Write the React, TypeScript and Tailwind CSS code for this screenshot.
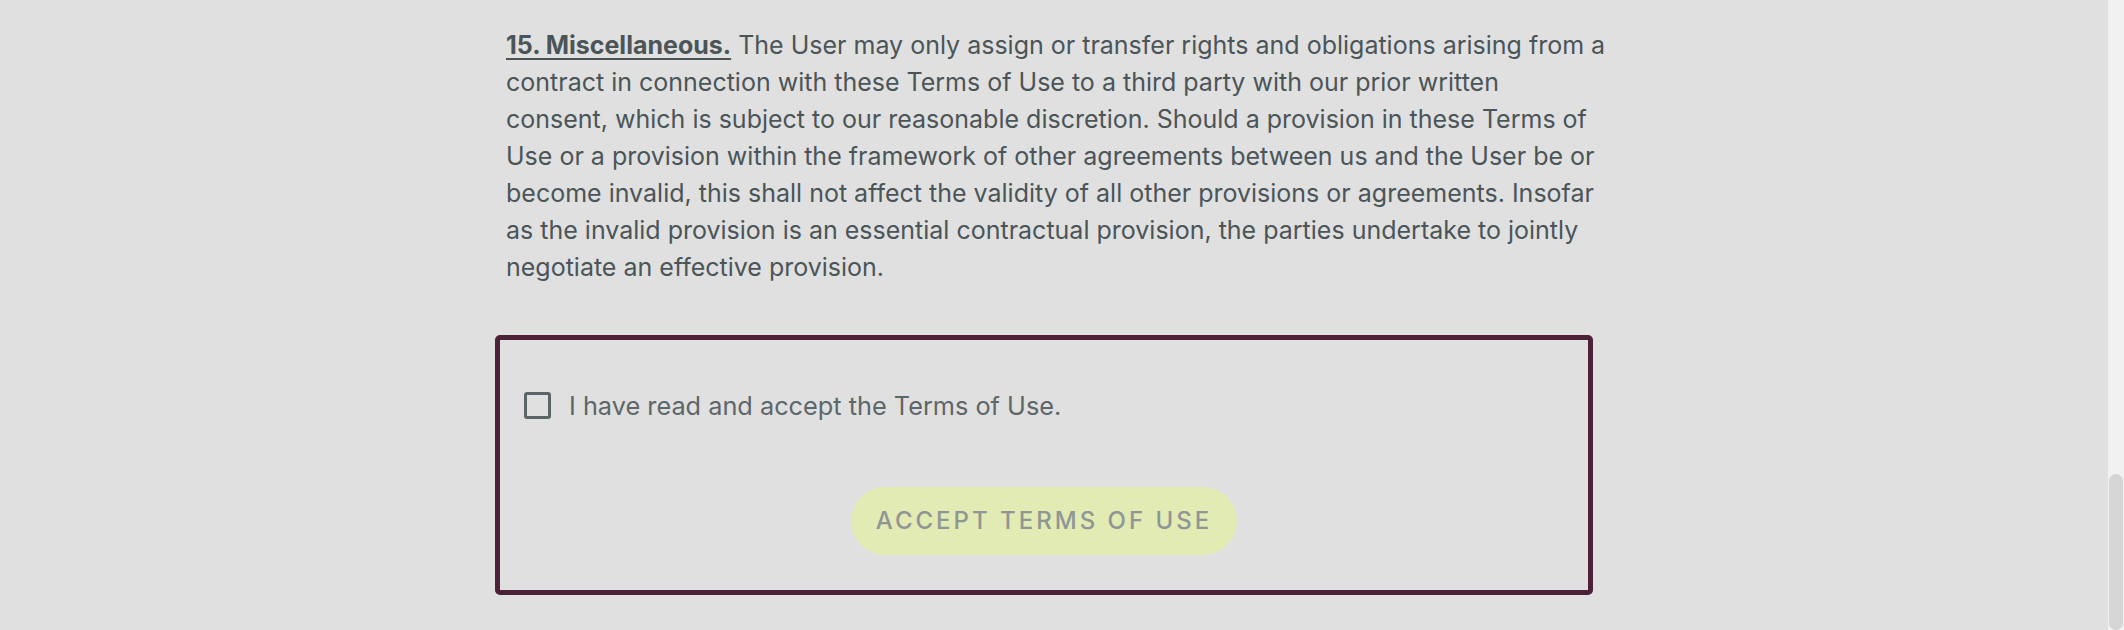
import React, { useState } from 'react';

const body = "The User may only assign or transfer rights and obligations arising from a contract in connection with these Terms of Use to a third party with our prior written consent, which is subject to our reasonable discretion. Should a provision in these Terms of Use or a provision within the framework of other agreements between us and the User be or become invalid, this shall not affect the validity of all other provisions or agreements. Insofar as the invalid provision is an essential contractual provision, the parties undertake to jointly negotiate an effective provision.";

export default function App() {
  const [accepted, setAccepted] = useState(false);

  return (
    <div className="flex h-[630px] w-full overflow-hidden bg-[#e0e0e0] font-['Inter',sans-serif]">
      <main className="flex-1">
        <div className="ml-[495px] w-[1098px] pt-[27px]">
          <p className="ml-[11px] w-[1100px] text-[25px] leading-[37px] text-[#4b5558]">
            <a href="#misc" className="font-bold underline underline-offset-[4px] decoration-2">
              15. Miscellaneous.
            </a>{' '}
            {body}
          </p>

          <div className="mt-[49px] rounded-[5px] border-[5px] border-[#4c2239] px-[24px] pt-[47px] pb-[35px]">
            <label className="flex h-[37px] cursor-pointer items-center">
              <input
                type="checkbox"
                checked={accepted}
                onChange={(e) => setAccepted(e.target.checked)}
                className="sr-only"
              />
              <span className="h-[27px] w-[27px] shrink-0 rounded-[3px] border-[3px] border-[#5b6466]" />
              <span className="ml-[18px] text-[25.3px] leading-[37px] text-[#5d6668]">
                I have read and accept the Terms of Use.
              </span>
            </label>

            <div className="mt-[63px] flex justify-center">
              <button
                disabled={!accepted}
                className="h-[68px] w-[386px] rounded-full bg-[#e2ebb4] text-[24px] font-medium uppercase tracking-[0.125em] text-[#8f9694]"
              >
                Accept Terms of Use
              </button>
            </div>
          </div>
        </div>
      </main>

      {/* scrollbar, pinned at the bottom */}
      <div className="flex w-[16px] flex-col bg-[#f1f1f1]">
        <div className="h-[485px]" />
        <div className="mx-auto h-[160px] w-[14px] rounded-full bg-[#d5d5d5]" />
      </div>
    </div>
  );
}
